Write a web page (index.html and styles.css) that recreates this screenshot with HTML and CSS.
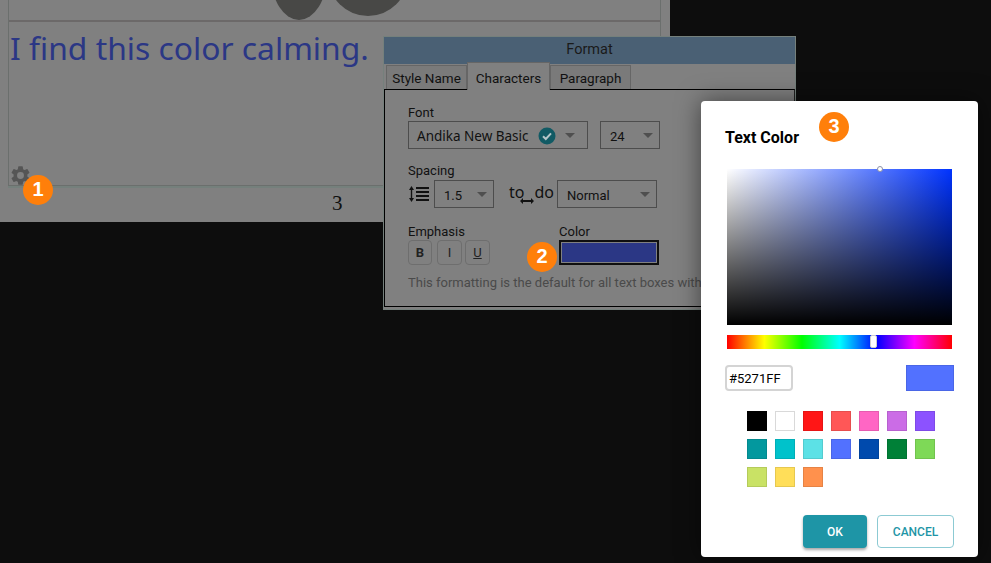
FILE: index.html
```html
<!DOCTYPE html>
<html>
  <head>
    <title>Text Color</title>
    <link rel="stylesheet" href="styles.css">
  </head>
  <body>
    <div class="page">
      <div class="frame">
        <div class="picture">
          <span class="blob blob-left"></span>
          <span class="blob blob-right"></span>
        </div>
        <p class="sample">I find this color calming.</p>
        <svg class="gear" viewBox="0 0 24 24"><path d="M19.14 12.94c.04-.3.06-.61.06-.94s-.02-.64-.07-.94l2.03-1.58a.49.49 0 0 0 .12-.61l-1.92-3.32a.49.49 0 0 0-.59-.22l-2.39.96a7 7 0 0 0-1.62-.94l-.36-2.54a.48.48 0 0 0-.48-.41h-3.84a.47.47 0 0 0-.47.41l-.36 2.54a7.3 7.3 0 0 0-1.63.94l-2.39-.96a.48.48 0 0 0-.59.22L2.72 8.87a.47.47 0 0 0 .12.61l2.03 1.58c-.05.3-.09.63-.09.94s.02.64.07.94l-2.03 1.58a.49.49 0 0 0-.12.61l1.92 3.32c.12.22.37.29.59.22l2.39-.96c.5.38 1.03.7 1.62.94l.36 2.54c.05.24.24.41.48.41h3.84c.24 0 .44-.17.47-.41l.36-2.54a7 7 0 0 0 1.62-.94l2.39.96c.22.08.47 0 .59-.22l1.92-3.32a.47.47 0 0 0-.12-.61zM12 15.6a3.6 3.6 0 1 1 0-7.2 3.6 3.6 0 0 1 0 7.2z"/></svg>
      </div>
      <div class="page-number">3</div>
    </div>

    <div class="format">
      <div class="format-title">Format</div>
      <div class="tabs">
        <div class="tab">Style Name</div>
        <div class="tab tab-active">Characters</div>
        <div class="tab">Paragraph</div>
      </div>
      <div class="panel">
        <label class="field-label">Font</label>
        <div class="row row-font">
          <div class="select select-font">
            <span class="font-name">Andika New Basic</span>
            <svg class="check" viewBox="0 0 18 18"><circle cx="9" cy="9" r="8.5"/><path d="M5 9.2l2.8 2.8L13 6.4"/></svg>
            <span class="arrow"></span>
          </div>
          <div class="select select-size"><span class="select-value">24</span><span class="arrow"></span></div>
        </div>
        <label class="field-label label-spacing">Spacing</label>
        <div class="row row-spacing">
          <svg class="line-height" viewBox="0 0 21 18">
            <path d="M3.5 1L1 5h5zM3.5 17L1 13h5z"/>
            <path d="M2.8 4h1.4v10H2.800z"/>
            <path d="M8 2h13v2H8zM8 6h13v2H8zM8 10h13v2H8zM8 14h13v2H8z"/>
          </svg>
          <div class="select select-spacing"><span class="select-value">1.5</span><span class="arrow"></span></div>
          <div class="to-do">
            <span>to</span>
            <svg class="to-do-arrow" viewBox="0 0 14 8"><path d="M0 4l3-3v2h8V1l3 3-3 3V5H3v2z"/></svg>
            <span>do</span>
          </div>
          <div class="select select-normal"><span class="select-value">Normal</span><span class="arrow"></span></div>
        </div>
        <div class="row row-style">
          <div class="emphasis">
            <label class="field-label">Emphasis</label>
            <div class="emphasis-buttons">
              <div class="em-btn em-bold">B</div>
              <div class="em-btn">I</div>
              <div class="em-btn em-under">U</div>
            </div>
          </div>
          <div class="color-field">
            <label class="field-label">Color</label>
            <div class="color-swatch"></div>
          </div>
        </div>
        <p class="note">This formatting is the default for all text boxes with</p>
      </div>
    </div>

    <div class="picker">
      <h2 class="picker-title">Text Color</h2>
      <div class="gradient"><span class="gradient-dot"></span></div>
      <div class="hue"><span class="hue-thumb"></span></div>
      <div class="value-row">
        <div class="hex">#5271FF</div>
        <div class="preview"></div>
      </div>
      <div class="swatches">
        <span class="swatch c-black"></span>
        <span class="swatch c-white"></span>
        <span class="swatch c-red"></span>
        <span class="swatch c-coral"></span>
        <span class="swatch c-pink"></span>
        <span class="swatch c-orchid"></span>
        <span class="swatch c-violet"></span>
        <span class="swatch c-teal"></span>
        <span class="swatch c-cyan"></span>
        <span class="swatch c-aqua"></span>
        <span class="swatch c-blue"></span>
        <span class="swatch c-navy"></span>
        <span class="swatch c-green"></span>
        <span class="swatch c-lime"></span>
        <span class="swatch c-olive"></span>
        <span class="swatch c-yellow"></span>
        <span class="swatch c-orange"></span>
      </div>
      <div class="actions">
        <div class="btn btn-ok">OK</div>
        <div class="btn btn-cancel">CANCEL</div>
      </div>
    </div>

    <span class="badge badge-1">1</span>
    <span class="badge badge-2">2</span>
    <span class="badge badge-3">3</span>
  </body>
</html>
```

FILE: styles.css
```css
html, body {
  margin: 0;
  padding: 0;
}

body {
  width: 991px;
  height: 563px;
  overflow: hidden;
  background: #0d0d0d;
  font-family: Roboto, sans-serif;
  color: #111;
}

/* page behind the dialogs */
.page {
  width: 670px;
  height: 222px;
  background: #808080;
  display: flex;
  flex-direction: column;
}

.frame {
  position: relative;
  width: 651px;
  height: 185px;
  margin-left: 8px;
  border-left: 1px solid #6b6f6d;
  border-right: 1px solid #6b6f6d;
  border-bottom: 1px solid #6b6f6d;
  box-shadow: 0 2px 0 #75807c;
}

.picture {
  position: relative;
  height: 20px;
  overflow: hidden;
  border-bottom: 2px solid #6c6969;
}

.blob {
  position: absolute;
  background: #484846;
  border-radius: 50%;
}

.blob-left {
  left: 262px;
  top: -70px;
  width: 56px;
  height: 90px;
}

.blob-right {
  left: 319px;
  top: -64px;
  width: 80px;
  height: 80px;
}

.sample {
  margin: 4px 0 0 1px;
  font-family: "Noto Sans", sans-serif;
  font-size: 31.8px;
  line-height: 44px;
  color: #2b3785;
  white-space: nowrap;
}

.gear {
  position: absolute;
  left: 0;
  bottom: -2px;
  width: 23px;
  height: 23px;
  fill: #555;
}

.page-number {
  margin: 5px 0 0 332px;
  font-family: "Liberation Serif", serif;
  font-size: 21px;
  line-height: 24px;
  color: #111;
}

/* format dialog */
.format {
  position: absolute;
  left: 383px;
  top: 36px;
  width: 413px;
  height: 274px;
  box-sizing: border-box;
  background: #808080;
  border: 1px solid #75807c;
}

.format-title {
  height: 27px;
  line-height: 25px;
  text-align: center;
  font-size: 14.5px;
  background: #4a6074;
  color: #1a1a1a;
}

.tabs {
  display: flex;
  height: 25px;
  padding-left: 2px;
  align-items: flex-end;
}

.tab {
  width: 81px;
  height: 24px;
  line-height: 24px;
  text-align: center;
  font-size: 13.5px;
  white-space: nowrap;
  border: 1px solid #666;
  border-bottom: 0;
  box-sizing: border-box;
  background: #7a7a7a;
}

.tab-active {
  width: 83px;
  height: 28px;
  margin-bottom: -1px;
  line-height: 30px;
  background: #808080;
  position: relative;
  z-index: 1;
}

.panel {
  height: 218px;
  box-sizing: border-box;
  padding: 15px 0 0 23px;
  border: 1px solid #000;
  border-right-color: #222;
}

.field-label {
  display: block;
  font-size: 13px;
  line-height: 15px;
  color: #111;
}

.row {
  display: flex;
  align-items: center;
}

.row-font {
  margin-top: 1px;
  gap: 12px;
}

.select {
  display: flex;
  align-items: center;
  justify-content: space-between;
  box-sizing: border-box;
  height: 28px;
  padding: 1px 6px 0 8px;
  border: 1px solid #4d4d4d;
  font-size: 13px;
  color: #111;
}

.select-value {
  margin-top: 2px;
}

.select-font {
  width: 180px;
  padding-right: 12px;
}

.select-size {
  width: 60px;
  padding-left: 9px;
}

.font-name {
  font-family: "Noto Sans", sans-serif;
  font-size: 13.5px;
  white-space: nowrap;
}

.check {
  width: 18px;
  height: 18px;
  margin-left: 9px;
}

.check circle {
  fill: #115a64;
}

.check path {
  fill: none;
  stroke: #b5c5c8;
  stroke-width: 2;
}

.arrow {
  width: 0;
  height: 0;
  margin-left: auto;
  border-left: 5px solid transparent;
  border-right: 5px solid transparent;
  border-top: 5px solid #4f4f4f;
}

.label-spacing {
  margin-top: 14px;
}

.row-spacing {
  margin-top: 2px;
}

.line-height {
  width: 21px;
  height: 18px;
  fill: #111;
}

.select-spacing {
  width: 60px;
  margin-left: 5px;
  padding-left: 9px;
}

.to-do {
  display: flex;
  width: 48px;
  height: 18px;
  margin: -5px 0 0 15px;
  font-family: "Noto Sans", sans-serif;
  font-size: 16px;
  line-height: 18px;
  color: #111;
}

.to-do-arrow {
  flex: none;
  width: 14px;
  height: 8px;
  margin: 14px 0 0 -4px;
  fill: #111;
}

.select-normal {
  width: 100px;
  padding-left: 9px;
}

.row-style {
  margin-top: 16px;
  align-items: flex-start;
}

.emphasis {
  width: 151px;
}

.emphasis-buttons {
  display: flex;
  gap: 3px;
  margin-top: 1px;
}

.em-btn {
  width: 25px;
  height: 25px;
  box-sizing: border-box;
  border: 1px solid #6e6e6e;
  border-radius: 4px;
  text-align: center;
  font-size: 13px;
  line-height: 23px;
  color: #222;
}

.em-bold {
  width: 24px;
  margin-right: 2px;
  font-weight: 700;
}

.em-under {
  text-decoration: underline;
}

.color-swatch {
  width: 100px;
  height: 25px;
  margin-top: 1px;
  box-sizing: border-box;
  border: 2px solid #0f0f0f;
  background: #2b3785;
  box-shadow: inset 0 0 0 1px #808080;
}

.note {
  margin: 10px 0 0;
  font-size: 13px;
  line-height: 15px;
  color: #4a4a4a;
  white-space: nowrap;
}

/* colour picker dialog */
.picker {
  position: absolute;
  left: 701px;
  top: 101px;
  width: 277px;
  height: 456px;
  box-sizing: border-box;
  padding: 26px 24px 0 26px;
  background: #fff;
  border-radius: 4px;
  box-shadow: 0 0 24px rgba(0, 0, 0, 0.5);
}

.picker-title {
  margin: 1px 0 0 -2px;
  font-size: 16px;
  line-height: 20px;
  font-weight: 700;
  color: #000;
}

.gradient {
  position: relative;
  width: 225px;
  height: 156px;
  margin-top: 21px;
  background:
    linear-gradient(to top, #000, transparent),
    linear-gradient(to right, #fff, #0033ff);
}

.gradient-dot {
  position: absolute;
  left: 150px;
  top: -3px;
  width: 6px;
  height: 6px;
  box-sizing: border-box;
  border: 1px solid #8a8fa8;
  border-radius: 50%;
  background: #fff;
}

.hue {
  position: relative;
  width: 225px;
  height: 14px;
  margin-top: 10px;
  background: linear-gradient(to right, #f00, #ff0 16.6%, #0f0 33.3%, #0ff 50%, #00f 66.6%, #f0f 83.3%, #f00);
}

.hue-thumb {
  position: absolute;
  left: 143px;
  top: 0;
  width: 7px;
  height: 13px;
  box-sizing: border-box;
  background: #fff;
  border: 1px solid #ccc;
  border-radius: 2px;
}

.value-row {
  display: flex;
  justify-content: space-between;
  width: 229px;
  margin: 16px 0 0 -2px;
}

.hex {
  width: 68px;
  height: 26px;
  box-sizing: border-box;
  padding-left: 2px;
  border: 2px solid #d4d4d4;
  border-radius: 4px;
  font-size: 13px;
  line-height: 24px;
  color: #000;
}

.preview {
  width: 48px;
  height: 26px;
  box-sizing: border-box;
  background: #5271ff;
  border: 1px solid #4a66e6;
}

.swatches {
  display: grid;
  grid-template-columns: repeat(7, 20px);
  gap: 8px;
  margin: 20px 0 0 20px;
}

.swatch {
  display: block;
  width: 20px;
  height: 20px;
  box-sizing: border-box;
  border: 1px solid;
}

.c-black { background: #000; border-color: #000; }
.c-white { background: #fff; border-color: #d9d9d9; }
.c-red { background: #ff1616; border-color: #e61414; }
.c-coral { background: #ff5757; border-color: #e64e4e; }
.c-pink { background: #ff66c4; border-color: #e65cb0; }
.c-orchid { background: #cb6ce6; border-color: #b761cf; }
.c-violet { background: #8c52ff; border-color: #7e4ae6; }
.c-teal { background: #03989e; border-color: #03898e; }
.c-cyan { background: #00c2cb; border-color: #00aeb7; }
.c-aqua { background: #5ce1e6; border-color: #53cbcf; }
.c-blue { background: #5271ff; border-color: #4a66e6; }
.c-navy { background: #004aad; border-color: #00439c; }
.c-green { background: #008037; border-color: #007332; }
.c-lime { background: #7ed957; border-color: #71c34e; }
.c-olive { background: #c9e265; border-color: #b5cb5b; }
.c-yellow { background: #ffde59; border-color: #e6c850; }
.c-orange { background: #ff914d; border-color: #e68345; }

.actions {
  display: flex;
  gap: 10px;
  margin: 28px 0 0 76px;
}

.btn {
  height: 33px;
  box-sizing: border-box;
  border-radius: 4px;
  text-align: center;
  font-size: 12px;
  font-weight: 500;
  line-height: 34px;
}

.btn-ok {
  width: 64px;
  background: #1e95a6;
  color: #fff;
  box-shadow: 0 2px 3px rgba(0, 0, 0, 0.35);
}

.btn-cancel {
  width: 77px;
  color: #1e95a6;
  background: #fff;
  border: 1px solid #8ccad3;
  line-height: 32px;
}

/* numbered callouts */
.badge {
  position: absolute;
  width: 30px;
  height: 30px;
  border-radius: 50%;
  background: #ff7f0a;
  color: #fff;
  font-family: "Liberation Sans", sans-serif;
  font-size: 20px;
  font-weight: 700;
  line-height: 29px;
  text-align: center;
}

.badge-1 { left: 23px; top: 175px; }
.badge-2 { left: 527px; top: 242px; }
.badge-3 { left: 819px; top: 112px; }
```
